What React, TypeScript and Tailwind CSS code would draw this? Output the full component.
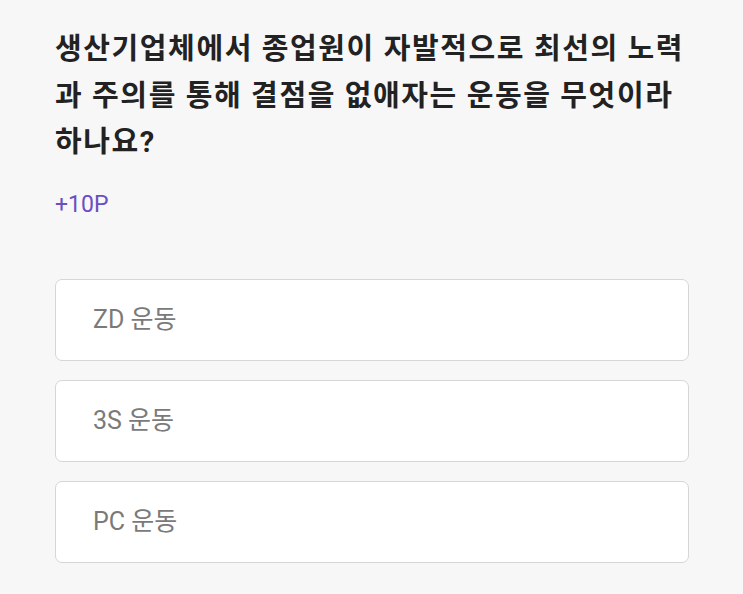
import React from "react";

const options = ["ZD 운동", "3S 운동", "PC 운동"];

export default function App() {
  return (
    <div
      className="w-[743px] h-[594px] bg-[#f7f7f7] overflow-hidden px-[55px] pt-[26px]"
      style={{ fontFamily: 'Roboto, "Noto Sans CJK KR", sans-serif' }}
    >
      <h1 className="text-[29px] leading-[46.5px] font-bold text-[#222222] tracking-[1.6px] whitespace-nowrap">
        생산기업체에서 종업원이 자발적으로 최선의 노력
        <br />
        과 주의를 통해 결점을 없애자는 운동을 무엇이라
        <br />
        하나요?
      </h1>
      <div className="mt-[24px] text-[23px] leading-[30px] text-[#6a4fc0]">+10P</div>
      <div className="mt-[59px] flex flex-col gap-[19px]">
        {options.map((o) => (
          <div
            key={o}
            className="h-[82px] w-[634px] bg-white border border-[#d6d6d6] rounded-[7px] flex items-center pl-[37px] text-[25px] text-[#7a7a7a]"
          >
            {o}
          </div>
        ))}
      </div>
    </div>
  );
}
